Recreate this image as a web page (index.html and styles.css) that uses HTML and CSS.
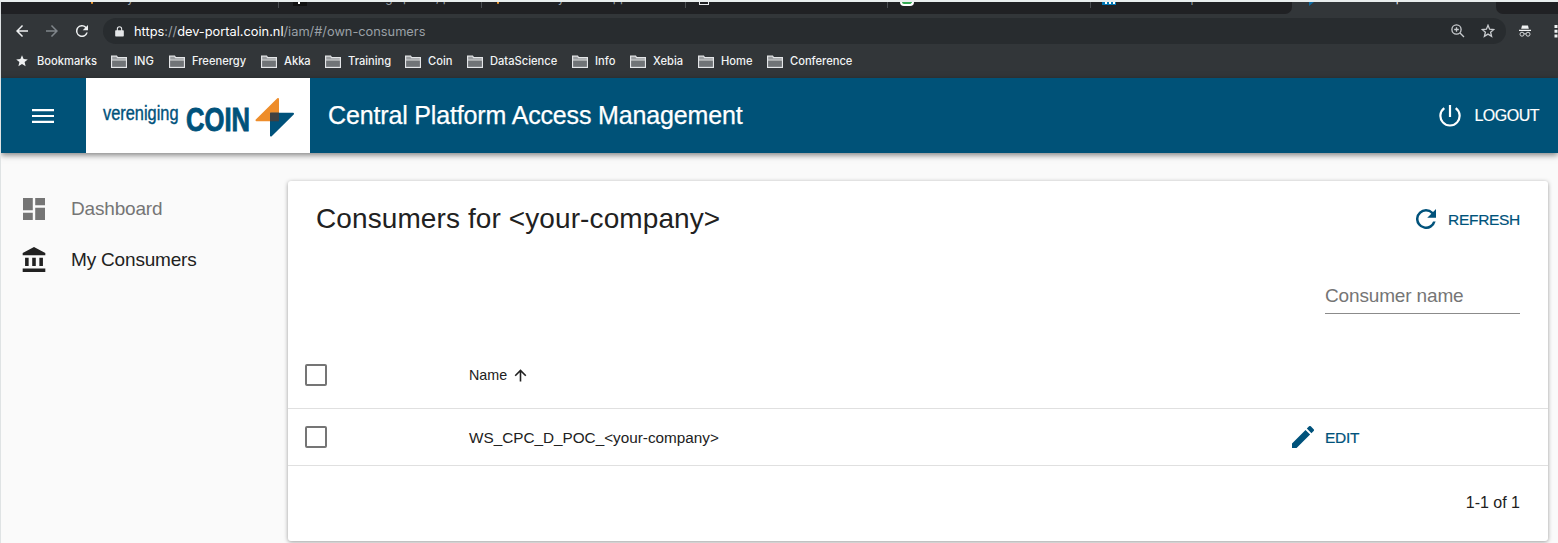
FILE: index.html
```
<!DOCTYPE html>
<html lang="en">
<head>
<meta charset="utf-8">
<title>Central Platform Access Management</title>
<link rel="stylesheet" href="styles.css">
</head>
<body>
<div class="browser">
  <div class="tabs">
    <div class="tab tab-first"><i class="fav fav-orange"></i><span>My Consumers</span></div>
    <div class="tab tab-2"><i class="fav fav-dark"></i><span>Coin message portal, proc</span></div>
    <div class="tab tab-3"><i class="fav fav-orange"></i><span>Identity based application</span></div>
    <div class="tab tab-4"><i class="fav fav-doc"></i><span>Create Coin Consumers</span></div>
    <div class="tab tab-5"><i class="fav fav-green"></i><span>Interoxion - Baeldoon</span></div>
    <div class="tab tab-6"><i class="fav fav-in"><b></b><b></b><b></b></i><span>Consumer | LinkedIn</span></div>
    <div class="tab tab-active"><i class="fav fav-blue"></i><span>COIN - dev portal</span></div>
    <div class="tab tab-new"><span>+</span></div>
  </div>
  <div class="toolbar">
    <svg class="nav-icon" viewBox="0 0 24 24"><path d="M20 11H7.800l5.600-5.600L12 4l-8 8 8 8 1.400-1.400L7.800 13H20z"/></svg>
    <svg class="nav-icon dim" viewBox="0 0 24 24"><path d="M4 11h12.200l-5.600-5.600L12 4l8 8-8 8-1.400-1.400 5.600-5.600H4z"/></svg>
    <svg class="nav-icon" viewBox="0 0 24 24"><path d="M17.650 6.350A8 8 0 1 0 19.730 14h-2.080A6 6 0 1 1 12 6c1.660 0 3.140.690 4.220 1.780L13 11h7V4z"/></svg>
    <div class="address">
      <svg class="lock" viewBox="0 0 10 12"><path fill-rule="evenodd" d="M1 4.500h1V3.200a3 3 0 0 1 6 0v1.300h1q.8 0 .8.8v5.400q0 .8-.8.8H1q-.8 0-.8-.8V5.300q0-.8.8-.8zm2.200 0h3.600V3.200a1.800 1.800 0 0 0-3.600 0z"/></svg>
      <span class="url">https<em>://</em>dev-portal.coin.nl<em>/iam/#/own-consumers</em></span>
      <svg class="omni" viewBox="0 0 14 14"><circle cx="5.500" cy="5.500" r="4.600"/><path d="M9 9l4 4M5.500 3.200v4.600M3.200 5.500h4.600"/></svg>
      <svg class="omni star" viewBox="0 0 14 14"><path d="M7 1.300l1.600 3.900 4.200.3-3.200 2.700 1 4.100L7 10.100l-3.600 2.200 1-4.100L1.200 5.500l4.200-.3z"/></svg>
    </div>
    <svg class="incog" viewBox="0 0 14 14"><path d="M4 1.500h6l.8 3.200H3.200zM1 5.800h12v1.200H1z"/><g><circle cx="4" cy="10.200" r="2"/><circle cx="10" cy="10.200" r="2"/><path d="M6 10q1-.6 2 0"/></g></svg>
    <svg class="kebab" viewBox="0 0 4 14"><path d="M.5 1h3v3h-3zM.5 5.700h3v3h-3zM.5 10.400h3v3h-3z"/></svg>
  </div>
  <div class="bookmarks">
    <div class="bm bm-star"><svg viewBox="0 0 12 12"><path d="M6 .2l1.600 3.900 4.200.3-3.200 2.700 1 4.100L6 9l-3.600 2.200 1-4.100L.2 4.400l4.200-.3z"/></svg><span>Bookmarks</span></div>
    <div class="bm ing"><svg class="folder" viewBox="0 0 16 13"><path class="back" d="M.6 12.300V1.200h5l1 1.500h8.800v9.600z"/><path class="front" d="M1.200 5.500h13.600v6.200H1.200z"/><path class="edge" d="M.6 5h14.800"/></svg><span>ING</span></div>
    <div class="bm free"><svg class="folder" viewBox="0 0 16 13"><path class="back" d="M.6 12.300V1.200h5l1 1.500h8.800v9.600z"/><path class="front" d="M1.200 5.500h13.600v6.200H1.200z"/><path class="edge" d="M.6 5h14.800"/></svg><span>Freenergy</span></div>
    <div class="bm akka"><svg class="folder" viewBox="0 0 16 13"><path class="back" d="M.6 12.300V1.200h5l1 1.500h8.800v9.600z"/><path class="front" d="M1.200 5.500h13.600v6.200H1.200z"/><path class="edge" d="M.6 5h14.800"/></svg><span>Akka</span></div>
    <div class="bm train"><svg class="folder" viewBox="0 0 16 13"><path class="back" d="M.6 12.300V1.200h5l1 1.500h8.800v9.600z"/><path class="front" d="M1.200 5.500h13.600v6.200H1.200z"/><path class="edge" d="M.6 5h14.800"/></svg><span>Training</span></div>
    <div class="bm coin"><svg class="folder" viewBox="0 0 16 13"><path class="back" d="M.6 12.300V1.200h5l1 1.500h8.800v9.600z"/><path class="front" d="M1.200 5.500h13.600v6.200H1.200z"/><path class="edge" d="M.6 5h14.800"/></svg><span>Coin</span></div>
    <div class="bm data"><svg class="folder" viewBox="0 0 16 13"><path class="back" d="M.6 12.300V1.200h5l1 1.500h8.800v9.600z"/><path class="front" d="M1.200 5.500h13.600v6.200H1.200z"/><path class="edge" d="M.6 5h14.800"/></svg><span>DataScience</span></div>
    <div class="bm info"><svg class="folder" viewBox="0 0 16 13"><path class="back" d="M.6 12.300V1.200h5l1 1.500h8.800v9.600z"/><path class="front" d="M1.200 5.500h13.600v6.200H1.200z"/><path class="edge" d="M.6 5h14.800"/></svg><span>Info</span></div>
    <div class="bm xebia"><svg class="folder" viewBox="0 0 16 13"><path class="back" d="M.6 12.300V1.200h5l1 1.500h8.800v9.600z"/><path class="front" d="M1.200 5.500h13.600v6.200H1.200z"/><path class="edge" d="M.6 5h14.800"/></svg><span>Xebia</span></div>
    <div class="bm home"><svg class="folder" viewBox="0 0 16 13"><path class="back" d="M.6 12.300V1.200h5l1 1.500h8.800v9.600z"/><path class="front" d="M1.200 5.500h13.600v6.200H1.200z"/><path class="edge" d="M.6 5h14.800"/></svg><span>Home</span></div>
    <div class="bm conf"><svg class="folder" viewBox="0 0 16 13"><path class="back" d="M.6 12.300V1.200h5l1 1.500h8.800v9.600z"/><path class="front" d="M1.200 5.500h13.600v6.200H1.200z"/><path class="edge" d="M.6 5h14.800"/></svg><span>Conference</span></div>
  </div>
</div>
<header class="appbar">
  <button class="menu"><svg viewBox="0 0 22 16"><path d="M0 1h22v2.200H0zM0 6.900h22v2.200H0zM0 12.800h22V15H0z"/></svg></button>
  <div class="brand">
    <svg class="logo" viewBox="0 0 225 75">
      <text class="logo-small" x="17" y="42" textLength="75.500" lengthAdjust="spacingAndGlyphs">vereniging</text>
      <text class="logo-big" x="100" y="52.500" textLength="64" lengthAdjust="spacingAndGlyphs">COIN</text>
      <path class="tri-orange" d="M192 21v21.300H170.500z"/>
      <path class="tri-blue" d="M185 35.700h22L185 57.500z"/>
      <path class="tri-dark" d="M184 34.700h9v8.600h-9z"/>
    </svg>
  </div>
  <h1>Central Platform Access Management</h1>
  <button class="logout"><svg viewBox="0 0 22 22"><path d="M11 0v12M5.300 3.200a9.600 9.600 0 1 0 11.400 0"/></svg><span>LOGOUT</span></button>
</header>
<div class="layout">
  <nav class="side">
    <a class="item"><svg viewBox="3 3 18 18"><path d="M3 13h8V3H3zm0 8h8v-6H3zm10 0h8V11h-8zm0-18v6h8V3z"/></svg><span>Dashboard</span></a>
    <a class="item active"><svg class="bank" viewBox="2 1 19 21"><path d="M4 10v7h3v-7zm6 0v7h3v-7zM2 22h19v-3H2zm14-12v7h3v-7zM11.500 1L2 6v2h19V6z"/></svg><span>My Consumers</span></a>
  </nav>
  <main class="card">
    <div class="card-head">
      <h2>Consumers for &lt;your-company&gt;</h2>
      <button class="refresh"><svg viewBox="4 4 16 16"><path d="M17.650 6.350A7.960 7.960 0 0 0 12 4a8 8 0 1 0 7.730 10h-2.080A6 6 0 1 1 12 6c1.660 0 3.140.690 4.220 1.780L13 11h7V4z"/></svg><span>REFRESH</span></button>
    </div>
    <div class="filter"><label>Consumer name</label></div>
    <div class="row head"><i class="check"></i><span class="name">Name</span><svg class="sort" viewBox="0 0 14 14"><path d="M7 13.500V1.500M1.300 7.200L7 1.500l5.700 5.700"/></svg></div>
    <div class="row"><i class="check"></i><span class="value">WS_CPC_D_POC_&lt;your-company&gt;</span>
      <button class="edit"><svg viewBox="3 3 18 18"><path d="M3 17.250V21h3.750L17.810 9.940l-3.750-3.750zM20.710 7.040a1 1 0 0 0 0-1.410l-2.340-2.340a1 1 0 0 0-1.410 0l-1.830 1.830 3.750 3.750z"/></svg><span>EDIT</span></button></div>
    <div class="pager"><span>1-1 of 1</span></div>
  </main>
</div>
</body>
</html>
```
FILE: styles.css
```
* { box-sizing: border-box; }
body { margin: 0; width: 1558px; height: 543px; overflow: hidden; background: #fafafa; color: #212121; font-family: "Liberation Sans", Arial, sans-serif; border-left: 1px solid #dfe3e4; border-top: 2px solid #e9eeee; }
button { border: 0; background: none; padding: 0; margin: 0; font: inherit; color: inherit; display: flex; align-items: center; }
h1, h2 { margin: 0; font-weight: 400; white-space: nowrap; }
svg { display: block; flex: none; }
i { font-style: normal; flex: none; }

.browser { height: 76px; background: #323639; font-family: Inter, Roboto, sans-serif; }
.tabs { height: 12px; display: flex; overflow: hidden; background: #323639; }
.tab { height: 12px; background: #202124; display: flex; flex: none; color: #9aa0a6; font-size: 12px; white-space: nowrap; overflow: hidden; position: relative; }
.tab span { line-height: 16px; margin-top: -12px; }
.tab::after { content: ""; position: absolute; right: 0; top: 0; width: 1px; height: 6px; background: #4a4d51; }
.tab-first { width: 278px; padding-left: 90px; }
.tab-2 { width: 203px; padding-left: 14px; }
.tab-3 { width: 204px; padding-left: 15px; }
.tab-4 { width: 202px; padding-left: 13px; }
.tab-5 { width: 203px; padding-left: 12px; }
.tab-6 { width: 201px; padding-left: 11px; border-bottom-right-radius: 7px; }
.tab-6::after, .tab-active::after, .tab-new::after { display: none; }
.tab-active { width: 204px; padding-left: 17px; background: #323639; color: #e8eaed; }
.tab-new { flex: 1; padding-left: 16px; border-bottom-left-radius: 7px; color: #d0d3d6; }
.fav { width: 14px; margin-right: 12px; height: 3px; }
.fav-orange { width: 2px; height: 2px; background: #f29a2e; border-radius: 0 0 2px 2px; margin-right: 23px; }
.fav-dark { height: 4px; background: linear-gradient(#fff, #fff) 5px 0 / 2px 2px no-repeat #111; }
.fav-doc { width: 10px; height: 3px; border: 1px solid #e8eaed; border-top: 0; margin-right: 13px; }
.fav-green { height: 4px; background: #34a853; border: 2px solid #fff; border-top: 0; border-radius: 0 0 8px 8px; }
.fav-in { height: 3px; background: #0077b5; display: flex; gap: 2px; padding-left: 3px; }
.fav-in b { width: 2px; height: 2px; background: #fff; }
.fav-blue { width: 5px; height: 4px; background: #0b6aa2; clip-path: polygon(0 0, 100% 0, 0 100%); margin-right: 15px; }

.toolbar { height: 34px; display: flex; align-items: center; padding-left: 12px; }
.nav-icon { width: 18px; height: 18px; fill: #eef0f1; margin-right: 12px; }
.nav-icon.dim { fill: #80868b; }
.address { width: 1403px; height: 26px; flex: none; border-radius: 13px; background: #282c2f; display: flex; align-items: center; padding-left: 12px; }
.lock { width: 9px; height: 11px; fill: #e4e6e8; }
.url { margin-left: 10px; width: 1317px; flex: none; font-size: 12.800px; color: #fff; white-space: nowrap; }
.url em { font-style: normal; color: #9aa0a6; }
.omni { width: 14px; height: 14px; fill: none; stroke: #c9cccf; stroke-width: 1.300; }
.star { margin-left: 16px; }
.incog { width: 14px; height: 14px; margin-left: 12px; fill: #f1f3f4; }
.incog g { fill: none; stroke: #d5d8da; stroke-width: 1; }
.kebab { width: 4px; height: 14px; margin-left: 22px; fill: #f1f3f4; }

.bookmarks { height: 28px; display: flex; align-items: center; padding: 0 0 2px 15px; color: #f1f3f4; font-size: 11.150px; font-weight: 500; white-space: nowrap; }
.bm { display: flex; align-items: center; flex: none; }
.bm svg { width: 12px; height: 12px; margin-right: 9px; fill: #eef0f1; }
.bm-star { width: 95px; }
.ing { width: 58px; } .free { width: 92px; } .akka { width: 64px; } .train { width: 80px; }
.coin { width: 62px; } .data { width: 105px; } .info { width: 58px; } .xebia { width: 68px; } .home { width: 69px; }
.bm .folder { width: 16px; height: 13px; margin-right: 7px; }
.folder .back { fill: #9a9da0; stroke: #e4e6e8; stroke-width: 1.200; }
.folder .front { fill: #707477; }
.folder .edge { stroke: #dcdedf; stroke-width: .8; }

.appbar { height: 75px; background: #005278; display: flex; align-items: center; color: #fff; box-shadow: 0 2px 6px rgba(0,0,0,.5); position: relative; }
.menu { width: 85px; height: 75px; padding-left: 31px; }
.menu svg { width: 22px; height: 16px; fill: #fff; }
.brand { width: 224px; height: 75px; background: #fff; overflow: hidden; }
.logo { width: 225px; height: 75px; }
.logo-small { font: 20px "Liberation Sans", sans-serif; fill: #00527b; stroke: #00527b; stroke-width: .4; }
.logo-big { font: bold 33px "Liberation Sans", sans-serif; fill: #00527b; stroke: #00527b; stroke-width: .9; }
.tri-orange, .tri-blue { stroke-width: 2; stroke-linejoin: round; }
.tri-orange { fill: #ee8d2b; stroke: #ee8d2b; }
.tri-blue { fill: #00527b; stroke: #00527b; }
.tri-dark { fill: #3f4142; }
.appbar h1 { font-size: 25px; letter-spacing: -.15px; line-height: 30px; margin: 0 0 2px 18px; -webkit-text-stroke: .25px #fff; }
.logout { margin-left: auto; margin-right: 19px; font-size: 16px; letter-spacing: -.5px; -webkit-text-stroke: .2px #fff; }
.logout svg { width: 22px; height: 22px; margin-right: 13px; fill: none; stroke: #fff; stroke-width: 2.200; }

.layout { display: flex; align-items: flex-start; padding-top: 28px; }
.side { width: 287px; padding: 2px 0 0 22px; }
.item { height: 51px; display: flex; align-items: center; color: #757575; font-size: 19px; letter-spacing: -.18px; }
.item svg { width: 22px; height: 22px; margin-right: 26px; fill: #757575; }
.active { color: #212121; }
.item .bank { width: 24px; height: 25px; margin: 0 25px 0 -1px; fill: #212121; }
.card { width: 1260px; height: 360px; background: #fff; border-radius: 3px; box-shadow: 0 1px 4px rgba(0,0,0,.38); }
.card-head { height: 75px; display: flex; align-items: center; justify-content: space-between; padding: 0 28px; }
.card h2 { font-size: 28px; letter-spacing: .1px; }
.refresh, .edit { color: #00527b; font-size: 15.500px; letter-spacing: -.3px; -webkit-text-stroke: .2px #00527b; }
.refresh svg { width: 20px; height: 20px; margin-right: 12px; fill: #00527b; }
.refresh span, .edit span, .value { padding-top: 2px; }
.filter { width: 195px; height: 58px; margin: 0 28px 0 auto; padding-top: 29px; border-bottom: 1px solid #8b8b8b; color: #757575; font-size: 19px; letter-spacing: -.15px; line-height: 22px; }
.row { height: 57px; display: flex; align-items: center; padding-left: 17px; border-bottom: 1px solid #e0e0e0; font-size: 15.300px; }
.head { height: 67px; margin-top: 28px; font-size: 14.300px; }
.name { padding-bottom: 1px; }
.check { width: 22px; height: 22px; border: 2px solid #757575; border-radius: 2px; margin-right: 142px; }
.sort { width: 13px; height: 13px; margin-left: 7px; fill: none; stroke: #212121; stroke-width: 1.700; }
.edit { margin-left: auto; width: 256px; }
.edit svg { width: 22px; height: 22px; margin-right: 11px; fill: #00527b; }
.pager { height: 73px; display: flex; align-items: center; justify-content: flex-end; padding-right: 28px; font-size: 16px; }
```
